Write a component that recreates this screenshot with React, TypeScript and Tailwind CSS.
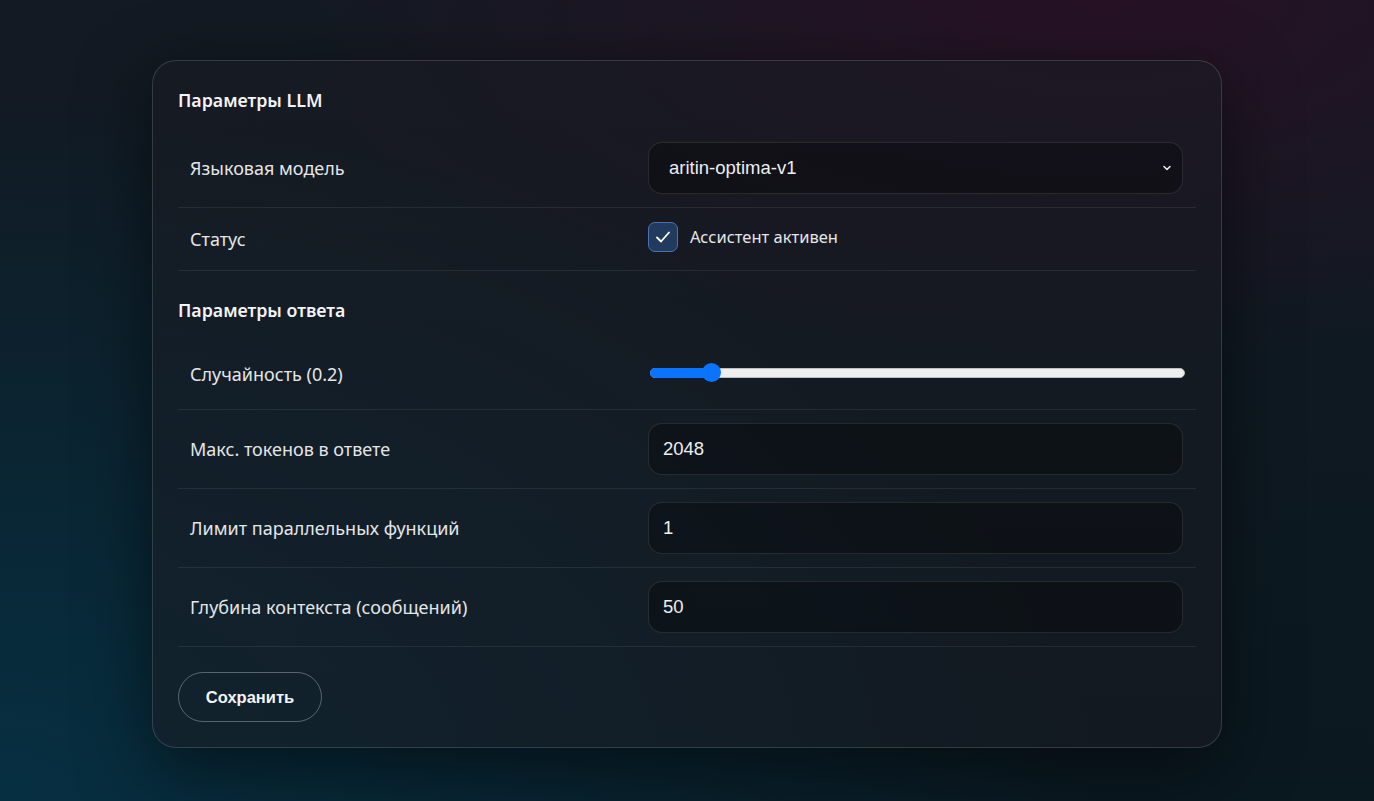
import { useState } from 'react';

const labelFont = { fontFamily: '"Noto Sans", "Open Sans", sans-serif' };

const Row = ({ label, children, className = '' }: { label: string; children: React.ReactNode; className?: string }) => (
  <div className={`grid grid-cols-[458px_1fr] items-center border-b border-white/[0.08] pl-3 pr-[13px] ${className}`}>
    <span className="text-[18px] text-[#e4e6e8]" style={labelFont}>{label}</span>
    {children}
  </div>
);

const fieldCls =
  'h-[52px] w-full rounded-[14px] border border-white/10 bg-black/30 px-[14px] text-[18.5px] text-[#eceef0] outline-none font-["Liberation_Sans",Arial,sans-serif]';

const App = () => {
  const [temp] = useState(0.2);
  const [active, setActive] = useState(true);
  const [tokens, setTokens] = useState('2048');
  const [parallel, setParallel] = useState('1');
  const [depth, setDepth] = useState('50');

  const pct = temp / 2;

  return (
    <div className="min-h-screen w-full bg-[radial-gradient(ellipse_60%_45%_at_80%_0%,rgba(48,14,38,0.7),transparent),radial-gradient(ellipse_80%_90%_at_0%_100%,rgba(6,52,72,0.85),transparent),linear-gradient(180deg,#131a23,#0a1820)] pt-[60px]">
      <div className="mx-auto w-[1070px] rounded-[24px] border border-white/[0.14] bg-[rgba(26,28,34,0.55)] p-[25px] shadow-[0_20px_70px_rgba(0,0,0,0.5)]">
        {/* LLM */}
        <h2 className="mb-[15px] text-[17.8px] font-semibold leading-[28px] text-[#f2f3f5]" style={labelFont}>
          Параметры LLM
        </h2>
        <Row label="Языковая модель" className="py-[13px]">
          <div className="relative">
            <select className={`${fieldCls} appearance-none pl-5`} defaultValue="aritin-optima-v1">
              <option>aritin-optima-v1</option>
            </select>
            <svg className="pointer-events-none absolute right-[11px] top-1/2 -translate-y-1/2" width="10" height="10" viewBox="0 0 10 10">
              <path d="M2 3.5 5 6.5 8 3.5" fill="none" stroke="#e5e7eb" strokeWidth="1.6" strokeLinecap="round" strokeLinejoin="round" />
            </svg>
          </div>
        </Row>
        <Row label="Статус" className="h-[63px]">
          <label className="-mt-1 flex cursor-pointer items-center gap-[12px]">
            <button
              onClick={() => setActive(!active)}
              className="flex h-[30px] w-[30px] items-center justify-center rounded-[7px] border border-[#4a72ad] bg-[#223a5e]"
            >
              {active && (
                <svg width="20" height="20" viewBox="0 0 20 20">
                  <path d="M4 10.5 8 14.5 16 5.5" fill="none" stroke="#fff" strokeWidth="1.8" strokeLinecap="round" strokeLinejoin="round" />
                </svg>
              )}
            </button>
            <span className="text-[16.5px] text-[#e4e6e8]" style={labelFont}>Ассистент активен</span>
          </label>
        </Row>

        {/* Response */}
        <h2 className="mb-4 mt-[25px] text-[17.8px] font-semibold leading-[28px] text-[#f2f3f5]" style={labelFont}>
          Параметры ответа
        </h2>
        <Row label={`Случайность (${temp})`} className="h-[70px]">
          <div className="relative -mt-1 ml-[2px] mr-[-2px] h-[19px]">
            <div className="absolute left-0 right-0 top-1/2 h-[10px] -translate-y-1/2 rounded-full border border-[#bdbdbd] bg-[#efefef]" />
            <div
              className="absolute left-0 top-1/2 h-[10px] -translate-y-1/2 rounded-full bg-[#0a74ff]"
              style={{ width: `calc(9px + ${pct} * (100% - 18px))` }}
            />
            <div
              className="absolute top-0 h-[19px] w-[19px] rounded-full bg-[#0a74ff]"
              style={{ left: `calc(${pct} * (100% - 19px))` }}
            />
          </div>
        </Row>
        <Row label="Макс. токенов в ответе" className="py-[13px]">
          <input className={fieldCls} value={tokens} onChange={(e) => setTokens(e.target.value)} />
        </Row>
        <Row label="Лимит параллельных функций" className="py-[13px]">
          <input className={fieldCls} value={parallel} onChange={(e) => setParallel(e.target.value)} />
        </Row>
        <Row label="Глубина контекста (сообщений)" className="py-[13px]">
          <input className={fieldCls} value={depth} onChange={(e) => setDepth(e.target.value)} />
        </Row>

        <button className='mt-[25px] h-[50px] w-[144px] rounded-full border border-white/30 text-[16.5px] font-bold text-[#f2f3f5] font-["Liberation_Sans",Arial,sans-serif]'>
          Сохранить
        </button>
      </div>
    </div>
  );
};

export default App;
